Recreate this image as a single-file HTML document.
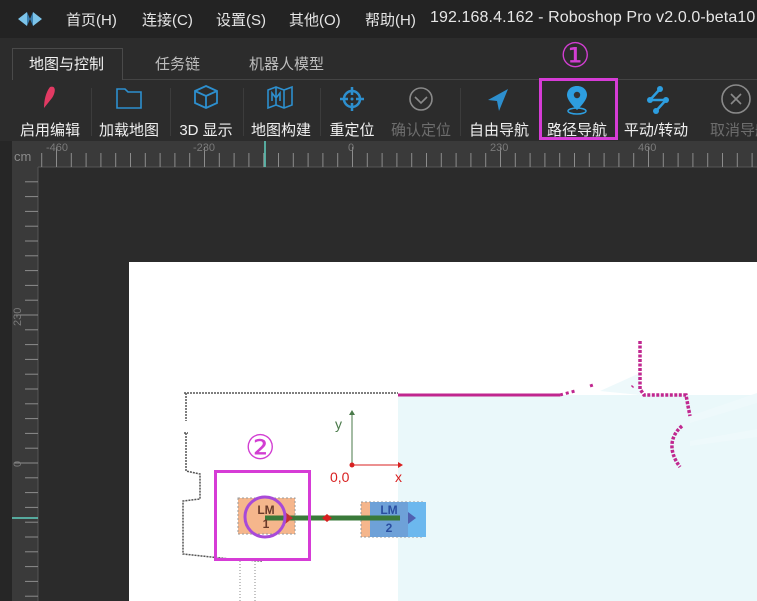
<!DOCTYPE html>
<html><head><meta charset="utf-8"><style>
*{margin:0;padding:0;box-sizing:border-box}
body{width:757px;height:601px;overflow:hidden;background:#2b2b2b;font-family:"Liberation Sans","Noto Sans CJK SC",sans-serif;position:relative}
.abs{position:absolute}
#title{left:0;top:0;width:757px;height:38px;background:#232323;color:#e6e6e6;font-size:15px}
#title span{position:absolute;top:9px;white-space:nowrap}
#tabs{left:0;top:38px;width:757px;height:42px;background:#2c2c2c}
.tab{position:absolute;top:15px;font-size:15px;color:#bdbdbd}
#tb{left:0;top:80px;width:757px;height:61px;background:#2c2c2c}
.lbl{position:absolute;top:39px;font-size:15px;color:#f0f0f0;white-space:nowrap;transform:translateX(-50%)}
.dis{color:#6d6d6d}
.sep{position:absolute;top:8px;width:1px;height:48px;background:#3c3c3c}
</style></head><body>
<div id="title" class="abs">
<svg class="abs" style="left:17px;top:11px" width="26" height="16" viewBox="0 0 26 16"><path d="M1 8 L10 1 L10 15 Z" fill="#7cc4ea"/><path d="M25 8 L16 1 L16 15 Z" fill="#7cc4ea"/><path d="M10 1 L13 8 L10 15 Z" fill="#3a7fb0"/><path d="M16 1 L13 8 L16 15Z" fill="#3a7fb0"/></svg>
<span style="left:66px">首页(H)</span><span style="left:142px">连接(C)</span><span style="left:216px">设置(S)</span><span style="left:289px">其他(O)</span><span style="left:365px">帮助(H)</span><span style="left:430px;font-size:16px;letter-spacing:0.1px">192.168.4.162 - Roboshop Pro v2.0.0-beta10</span>
</div>
<div id="tabs" class="abs">
<div class="abs" style="left:12px;top:10px;width:111px;height:33px;border:1px solid #4a4a4a;border-bottom:none;background:#2c2c2c"></div>
<div class="abs" style="left:123px;top:41px;width:634px;height:1px;background:#444"></div>
<div class="tab" style="left:29px;color:#f2f2f2">地图与控制</div>
<div class="tab" style="left:155px">任务链</div>
<div class="tab" style="left:249px">机器人模型</div>
<div class="abs" style="left:560px;top:-1px;font-size:34px;color:#d23ed2;font-family:'DejaVu Sans',sans-serif;line-height:38px">①</div>
</div>
<div id="tb" class="abs">
<div class="sep" style="left:91px"></div><div class="sep" style="left:170px"></div><div class="sep" style="left:243px"></div><div class="sep" style="left:320px"></div><div class="sep" style="left:460px"></div>
<svg class="abs" style="left:0;top:0" width="757" height="40">
<path d="M50 7 C56 5 56 12 52 18 L44 28 C44 20 46 12 50 7Z" fill="#e23a63"/>
<path d="M117 9 h8 l3 3 h13 v16 h-24z" fill="none" stroke="#2d8fce" stroke-width="1.6"/>
<path d="M206 6 l11 5 v12 l-11 5 l-11 -5 v-12z M195 11 l11 5 l11 -5 M206 16 v12" fill="none" stroke="#2d8fce" stroke-width="1.8"/>
<path d="M268 10 l8 -3 l8 3 l8 -3 v18 l-8 3 l-8 -3 l-8 3z M276 7v18 M284 10v18 M272 21v-8 l4 5 l4 -5 v8" fill="none" stroke="#2d8fce" stroke-width="1.6"/>
<circle cx="352" cy="19" r="8" fill="none" stroke="#2d8fce" stroke-width="2.5"/><path d="M352 7v8 M352 23v8 M340 19h8 M356 19h8" stroke="#2d8fce" stroke-width="2.5"/><circle cx="352" cy="19" r="1.5" fill="#2d8fce"/>
<circle cx="421" cy="19" r="11" fill="none" stroke="#8a8a8a" stroke-width="1.6"/><path d="M415 17 l6 6 l6 -6" fill="none" stroke="#8a8a8a" stroke-width="1.6"/>
<path d="M508 9 L488 20 L497 21 L499 31 Z" fill="#2d8fce"/>
<path d="M577 6 c-7 0 -10 5 -10 9 c0 6 10 15 10 15 c0 0 10 -9 10 -15 c0 -4 -3 -9 -10 -9z" fill="#2d9ee0"/><circle cx="577" cy="15" r="3.2" fill="#333"/><ellipse cx="577" cy="31" rx="9" ry="3" fill="none" stroke="#2d9ee0" stroke-width="1.5"/>
<circle cx="660" cy="9" r="3" fill="#2d9ee0"/><circle cx="650" cy="20" r="3" fill="#2d9ee0"/><circle cx="666" cy="20" r="3" fill="#2d9ee0"/><circle cx="656" cy="31" r="3" fill="#2d9ee0"/><path d="M660 9 L650 20 H666 L656 31" fill="none" stroke="#2d9ee0" stroke-width="2.5"/>
<circle cx="736" cy="19" r="14" fill="none" stroke="#8a8a8a" stroke-width="1.6"/><path d="M731 14 l10 10 M741 14 l-10 10" stroke="#8a8a8a" stroke-width="1.6"/>
</svg>
<div class="lbl" style="left:50px">启用编辑</div><div class="lbl" style="left:129px">加载地图</div><div class="lbl" style="left:206px">3D 显示</div><div class="lbl" style="left:281px">地图构建</div><div class="lbl" style="left:352px">重定位</div><div class="lbl dis" style="left:421px">确认定位</div><div class="lbl" style="left:499px">自由导航</div><div class="lbl" style="left:577px">路径导航</div><div class="lbl" style="left:656px">平动/转动</div><div class="lbl dis" style="left:740px">取消导航</div>
<div class="abs" style="left:539px;top:-2px;width:79px;height:62px;border:3px solid #d63cd6"></div>
</div>
<svg class="abs" style="left:0;top:141px" width="757" height="460" id="cv">
<rect x="0" y="0" width="12" height="460" fill="#262626"/>
<rect x="12" y="0" width="745" height="26" fill="#3a3a3a"/>
<rect x="12" y="0" width="26" height="460" fill="#3a3a3a"/>
<line x1="38" y1="26" x2="757" y2="26" stroke="#555"/><line x1="38" y1="26" x2="38" y2="460" stroke="#555"/>
<text x="14" y="20" font-size="13" fill="#8a8a8a" font-family="Liberation Sans">cm</text>
<g id="ht" stroke="#8c8c8c" stroke-width="1"></g>
<g font-size="11" fill="#7a7a7a" font-family="Liberation Sans"><text x="46" y="10">-460</text><text x="193" y="10">-230</text><text x="348" y="10">0</text><text x="490" y="10">230</text><text x="638" y="10">460</text>
<text transform="translate(21,185) rotate(-90)">230</text><text transform="translate(21,326) rotate(-90)">0</text></g>
<line x1="265" y1="0" x2="265" y2="26" stroke="#5fd0c0" stroke-width="1.5"/>
<line x1="12" y1="377" x2="38" y2="377" stroke="#5fd0c0" stroke-width="1.5"/>
<rect x="129" y="121" width="628" height="339" fill="#fff"/>
<path d="M398 254 L757 254 L757 460 L398 460Z" fill="#eaf8fa"/>
<path d="M600 250 L640 232 L640 254Z M690 275 L757 252 L757 262 L690 282Z M690 300 L757 288 L757 296 L690 305Z" fill="#eef9fb"/>
<path d="M184 252 H398 M186 252 V280 M186 292 V330 L200 333 V358 L183 360 V413 L230 418 L262 420 M184 292 h4" fill="none" stroke="#555" stroke-width="1.5" stroke-dasharray="2 1"/>
<path d="M240 420 v40 M255 420 v40" stroke="#888" stroke-dasharray="1 2"/>
<path d="M398 254 H560" stroke="#c0278f" stroke-width="3"/>
<path d="M560 254 L575 250 M590 245 L593 244 M632 246 L633 245" fill="none" stroke="#c0278f" stroke-width="3" stroke-dasharray="3 3"/>
<path d="M640 200 V248 L644 254 H686 L688 265 L690 275 M682 285 C670 295 668 310 680 326" fill="none" stroke="#c0278f" stroke-width="3.5" stroke-dasharray="3 1.5"/>
<path d="M352 324 V271 M352 324 H402" fill="none" stroke="#4a7a4a" stroke-width="1"/>
<path d="M352 324 H400" stroke="#d82020" stroke-width="1"/><path d="M398 321 l5 3 l-5 3z" fill="#d82020"/><path d="M349 274 l3 -5 l3 5z" fill="#4a7a4a"/><circle cx="352" cy="324" r="2.5" fill="#d82020"/>
<text x="335" y="288" font-size="14" fill="#4a7a4a" font-family="Liberation Sans">y</text>
<text x="330" y="341" font-size="14" fill="#d82020" font-family="Liberation Sans">0,0</text>
<text x="395" y="341" font-size="14" fill="#d82020" font-family="Liberation Sans">x</text>
<rect x="238" y="357" width="57" height="36" fill="#f5b68c" stroke="#999" stroke-dasharray="2 2"/>
<rect x="361" y="361" width="63" height="35" fill="#f5b68c" stroke="#999" stroke-dasharray="2 2"/>
<rect x="370" y="361" width="56" height="35" fill="#5f9ee0" opacity="0.9"/>
<rect x="408" y="361" width="18" height="35" fill="#6cb8ee"/>
<line x1="265" y1="377" x2="400" y2="377" stroke="#3a7a3a" stroke-width="5"/>
<path d="M322 377 l5 -4 l5 4 l-5 4z" fill="#d82020"/>
<path d="M285 371 l8 6 l-8 6z" fill="#c03030"/><path d="M408 371 l8 6 l-8 6z" fill="#5060b0"/>
<text x="266" y="373" font-size="12" font-weight="bold" fill="#6a3a2a" text-anchor="middle" font-family="Liberation Sans">LM</text><text x="266" y="387" font-size="12" font-weight="bold" fill="#6a3a2a" text-anchor="middle" font-family="Liberation Sans">1</text>
<text x="389" y="373" font-size="12" font-weight="bold" fill="#2a4ea0" text-anchor="middle" font-family="Liberation Sans">LM</text><text x="389" y="391" font-size="12" font-weight="bold" fill="#2a4ea0" text-anchor="middle" font-family="Liberation Sans">2</text>
<circle cx="265" cy="376" r="20" fill="none" stroke="#a84ad8" stroke-width="3"/>
<rect x="215.5" y="330.5" width="94" height="88" fill="none" stroke="#d63cd6" stroke-width="3"/>
<text x="245" y="318" font-size="34" fill="#d23ed2" font-family="DejaVu Sans">②</text>
</svg>
<script>
var g=document.getElementById('ht'),s='';
for(var i=-30;i<30;i++){var x=352.5+i*14.8;if(x<40||x>757)continue;var maj=(i%10==0);s+='<line x1="'+x+'" y1="'+(maj?6:12)+'" x2="'+x+'" y2="26"/>';}
for(var j=-30;j<30;j++){var y=322+j*14.8;if(y<28||y>460)continue;s+='<line x1="'+(j%10==0?14:25)+'" y1="'+y+'" x2="38" y2="'+y+'"/>';}
g.innerHTML=s;
</script>
</body></html>
